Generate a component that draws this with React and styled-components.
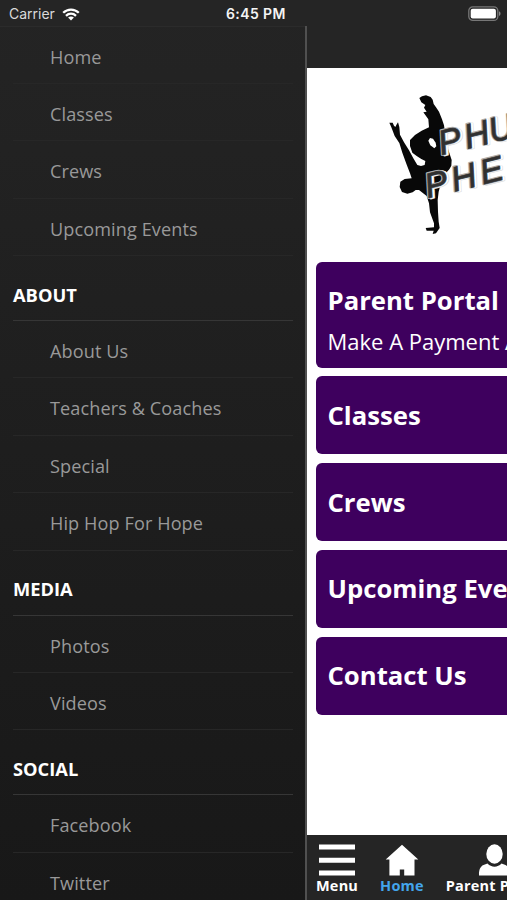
import React from "react";
import styled, { createGlobalStyle } from "styled-components";

const GlobalStyle = createGlobalStyle`
  body {
    margin: 0;
    background: #1c1c1c;
    font-family: "Open Sans", "Noto Sans", sans-serif;
  }

  * {
    box-sizing: border-box;
  }
`;

const Screen = styled.div`
  display: flex;
  flex-direction: column;
  width: 507px;
  height: 900px;
  overflow: hidden;
  background: linear-gradient(#242424, #181818);
`;

const StatusBar = styled.header`
  display: flex;
  flex: none;
  align-items: center;
  height: 26px;
  padding: 2px 6px 0 9px;
  background: #252525;
  color: #f4f4f4;
  font: 14px/24px Inter, sans-serif;
`;

const Carrier = styled.div`
  display: flex;
  align-items: center;
  gap: 6px;
  width: 217px;
`;

const CarrierName = styled.span`
  width: 47px;
  color: #dadada;
  white-space: nowrap;
`;

const Time = styled.div`
  flex: 1;
  font-weight: 600;
  letter-spacing: 0.4px;
`;

const Body = styled.div`
  display: flex;
  flex: 1;
  min-height: 0;
`;

const Drawer = styled.nav`
  flex: none;
  width: 305px;
  padding: 0.5px 12px 0 13px;
  overflow: hidden;
  box-shadow: inset 0 1px #2b2b2b;
`;

const DrawerItem = styled.div`
  height: 57.4px;
  padding: 3px 0 0 37px;
  border-bottom: 1px solid #272727;
  color: #999;
  font-size: 18.1px;
  line-height: 54px;
  letter-spacing: 0.1px;
  white-space: nowrap;
`;

const DrawerHeading = styled.div`
  height: 65px;
  padding-top: 12.5px;
  border-bottom: 1px solid #363636;
  color: #fff;
  font-size: 18.3px;
  font-weight: 700;
  line-height: 51px;
`;

const Page = styled.main`
  display: flex;
  flex: none;
  flex-direction: column;
  width: 400px;
  background: #fff;
  border-left: 2px solid #505050;
`;

const NavBar = styled.div`
  flex: none;
  height: 42px;
  background: #252525;
`;

const Content = styled.div`
  display: flex;
  flex: 1;
  flex-direction: column;
  align-items: flex-start;
  padding: 17px 8.5px 0;
`;

const Cards = styled.div`
  display: flex;
  flex-direction: column;
  gap: 8.9px;
  width: 100%;
  margin-top: 8.5px;
`;

const Card = styled.section`
  display: flex;
  flex-direction: column;
  justify-content: center;
  height: ${props => (props.$tall ? 106 : 77.9)}px;
  padding: ${props => (props.$tall ? 12 : 1)}px 12px 0;
  border-radius: 6px;
  background: #3e005e;
  color: #fff;
  white-space: nowrap;
`;

const CardTitle = styled.div`
  font-size: 25.7px;
  font-weight: 700;
  line-height: 40px;
`;

const CardText = styled.div`
  font-size: 22px;
  line-height: 40px;
`;

const TabBar = styled.footer`
  display: flex;
  flex: none;
  gap: 22px;
  height: 65px;
  padding: 8px 0 0 9px;
  background: #252525;
`;

const Tab = styled.div`
  display: flex;
  flex-direction: column;
  align-items: center;
  color: ${props => (props.$active ? "#43a5ec" : "#fff")};
  font-size: 14.5px;
  font-weight: 700;
  line-height: 20px;
  letter-spacing: 0.2px;
  white-space: nowrap;

  svg {
    margin-bottom: -1px;
  }
`;

const LogoArt = styled.svg`
  flex: none;
  margin-left: 64.5px;
`;

const WifiIcon = () => (
  <svg width="18" height="13" viewBox="0 0 18 13">
    <g fill="none" stroke="#fff" strokeWidth="2.3">
      <path d="M1.2 4.8C5.6.5 12.4.5 16.8 4.8" />
      <path d="M4 7.8c2.9-2.8 7.1-2.8 10 0" />
    </g>
    <path d="M6.1 9.5c1.7-1.5 4.1-1.5 5.8 0L9 12.6z" fill="#fff" />
  </svg>
);

const BatteryIcon = () => (
  <svg width="33" height="16" viewBox="0 0 33 16">
    <rect x=".8" y=".8" width="29" height="13.6" rx="4" fill="none" stroke="#777" strokeWidth="1.3" />
    <rect x="2.7" y="2.7" width="25.2" height="9.8" rx="2" fill="#fff" />
    <path d="M31 5.3c2 .8 2 3.8 0 4.6z" fill="#888" />
  </svg>
);

const MenuIcon = () => (
  <svg width="36" height="34" viewBox="0 0 36 34">
    <path d="M0 1.500h36v5H0zM0 14.700h36v5H0zM0 27.500h36v5H0z" fill="#fff" />
  </svg>
);

const HomeIcon = () => (
  <svg width="34" height="34" viewBox="0 0 34 34">
    <path d="M17 1.800 33.300 16.400H29.500V32.500H19.200v-6h-4.400v6H4.400V16.400H.7z" fill="#fff" />
  </svg>
);

const PersonIcon = () => (
  <svg width="34" height="34" viewBox="0 0 34 34">
    <ellipse cx="16.5" cy="11" rx="8.2" ry="9.7" fill="#fff" />
    <path
      d="M1 32.500c-.2-5 1-9 4.500-10.500l4-1.400c3.800 4.200 10.200 4.200 14 0l4 1.400C31 23.500 32.200 27.500 32 32.500z"
      fill="#fff"
    />
  </svg>
);

const LogoWord = ({ x, y, text, positions }) => (
  <g transform={`translate(${x} ${y}) rotate(-14)`}>
    <text x={positions} fill="#ddd" stroke="#ddd" strokeWidth="7" transform="translate(6 2)">
      {text}
    </text>
    <text x={positions} fill="#fff" stroke="#fff" strokeWidth="5" transform="translate(5 1)">
      {text}
    </text>
    <text x={positions} fill="#aaa" stroke="#aaa" strokeWidth="7" transform="translate(-1 -1)">
      {text}
    </text>
    <text x={positions} fill="#303030" stroke="#303030" strokeWidth="2">
      {text}
    </text>
  </g>
);

const Logo = () => (
  <LogoArt width="200" height="168" viewBox="0 0 600 504">
    <path
      d="M118 39 126 34 138 31 152 36 158 44 161 57 168 67 177 80 186 103 192 121 196 150 202 185
        210 210 215 225 214 242 208 253 195 268 184 290 176 320 173 345 174 380 176 410 179 429
        168 445 158 447 161 437 140 437 137 429 162 427 162 415 150 382 147 355 140 333 117 315
        107 315 98 322 82 326 66 321 59 306 61 290 74 282 95 280 90 265 79 236 67 203 58 174 44 153
        34 127 28 113 38 113 42 122 46 126 49 120 54 112 58 126 60 149 72 172 87 196 100 220
        112 240 123 243 134 240 136 228 124 222 110 213 97 203 90 183 90 165 105 150 125 137 147 127
        145 103 130 82 140 80 132 68 136 60 124 52z"
      fill="#080808"
    />
    <path d="m145 167 5-8 9 2 8 12 2 11-6 6-12-9z" fill="#fff" />
    <g fontFamily="'Liberation Sans', sans-serif" fontStyle="italic" fontSize="104" strokeLinejoin="round">
      <LogoWord x={184} y={211} text="PHU" positions="0 80 156" />
      <LogoWord x={143} y={340} text="PHE" positions="0 82 171" />
    </g>
  </LogoArt>
);

const sections = [
  { items: ["Home", "Classes", "Crews", "Upcoming Events"] },
  {
    title: "ABOUT",
    items: ["About Us", "Teachers & Coaches", "Special", "Hip Hop For Hope"]
  },
  { title: "MEDIA", items: ["Photos", "Videos"] },
  { title: "SOCIAL", items: ["Facebook", "Twitter"] }
];

const cards = [
  { title: "Parent Portal", text: "Make A Payment And More" },
  { title: "Classes" },
  { title: "Crews" },
  { title: "Upcoming Events" },
  { title: "Contact Us" }
];

const App = () => (
  <>
    <GlobalStyle />
    <Screen>
      <StatusBar>
        <Carrier>
          <CarrierName>Carrier</CarrierName>
          <WifiIcon />
        </Carrier>
        <Time>6:45 PM</Time>
        <BatteryIcon />
      </StatusBar>
      <Body>
        <Drawer>
          {sections.map(({ title, items }) => (
            <React.Fragment key={items[0]}>
              {title ? <DrawerHeading>{title}</DrawerHeading> : null}
              {items.map(item => (
                <DrawerItem key={item}>{item}</DrawerItem>
              ))}
            </React.Fragment>
          ))}
        </Drawer>
        <Page>
          <NavBar />
          <Content>
            <Logo />
            <Cards>
              {cards.map(({ title, text }) => (
                <Card key={title} $tall={Boolean(text)}>
                  <CardTitle>{title}</CardTitle>
                  {text ? <CardText>{text}</CardText> : null}
                </Card>
              ))}
            </Cards>
          </Content>
          <TabBar>
            <Tab>
              <MenuIcon />
              Menu
            </Tab>
            <Tab $active>
              <HomeIcon />
              Home
            </Tab>
            <Tab>
              <PersonIcon />
              Parent Portal
            </Tab>
          </TabBar>
        </Page>
      </Body>
    </Screen>
  </>
);

export default App;
